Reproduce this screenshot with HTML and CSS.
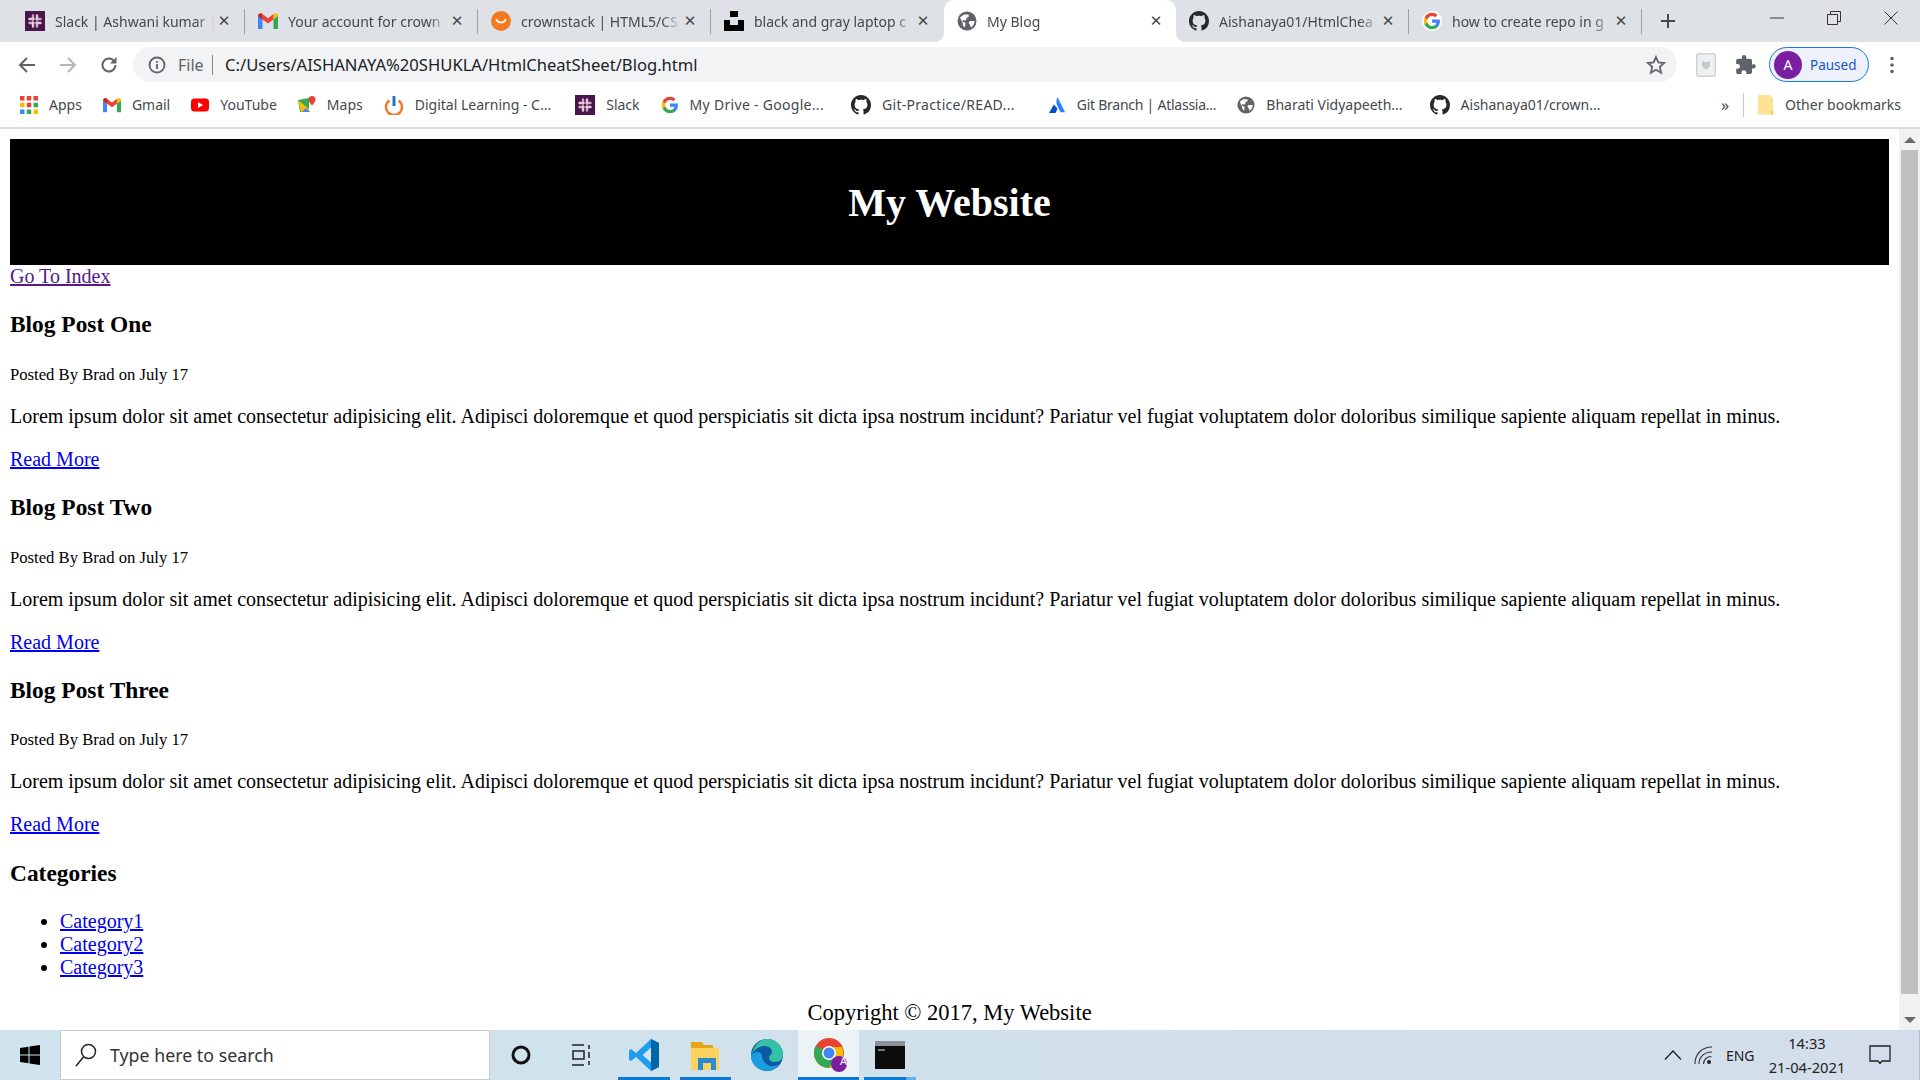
FILE: index.html
```html
<!DOCTYPE html>
<html lang="en">
<head>
  <meta charset="UTF-8">
  <title>My Blog</title>
  <link rel="stylesheet" href="styles.css">
</head>
<body>

  <svg class="defs" width="0" height="0">
    <symbol id="i-github" viewBox="0 0 16 16"><path fill="#24292e" d="M8 0C3.58 0 0 3.58 0 8c0 3.54 2.29 6.53 5.47 7.59.4.07.55-.17.55-.38 0-.19-.01-.82-.01-1.49-2.01.37-2.53-.49-2.69-.94-.09-.23-.48-.94-.82-1.13-.28-.15-.68-.52-.01-.53.63-.01 1.08.58 1.23.82.72 1.21 1.87.87 2.33.66.07-.52.28-.87.51-1.07-1.78-.2-3.64-.89-3.64-3.95 0-.87.31-1.59.82-2.15-.08-.2-.36-1.02.08-2.12 0 0 .67-.21 2.2.82.64-.18 1.32-.27 2-.27.68 0 1.36.09 2 .27 1.53-1.04 2.2-.82 2.2-.82.44 1.1.16 1.92.08 2.12.51.56.82 1.27.82 2.15 0 3.07-1.87 3.75-3.65 3.95.29.25.54.73.54 1.48 0 1.07-.01 1.93-.01 2.2 0 .21.15.46.55.38A8.013 8.013 0 0016 8c0-4.42-3.58-8-8-8z"/></symbol>
    <symbol id="i-google" viewBox="0 0 24 24">
      <path fill="#4285f4" d="M22.56 12.25c0-.78-.07-1.53-.2-2.25H12v4.26h5.92c-.26 1.37-1.04 2.53-2.21 3.31v2.77h3.57c2.08-1.92 3.28-4.74 3.28-8.09z"/>
      <path fill="#34a853" d="M12 23c2.97 0 5.46-.98 7.28-2.66l-3.57-2.77c-.98.66-2.23 1.06-3.71 1.06-2.86 0-5.29-1.93-6.16-4.53H2.18v2.84C3.99 20.53 7.7 23 12 23z"/>
      <path fill="#fbbc05" d="M5.84 14.09c-.22-.66-.35-1.36-.35-2.09s.13-1.43.35-2.09V7.07H2.18C1.43 8.55 1 10.22 1 12s.43 3.45 1.18 4.93l2.85-2.22.81-.62z"/>
      <path fill="#ea4335" d="M12 5.38c1.62 0 3.06.56 4.21 1.64l3.15-3.15C17.45 2.09 14.97 1 12 1 7.7 1 3.99 3.47 2.18 7.07l3.66 2.84c.87-2.6 3.3-4.53 6.16-4.53z"/>
    </symbol>
    <symbol id="i-gmail" viewBox="0 0 20 16">
      <path fill="#4285f4" d="M0 16V2.5L4.500 6v10z"/>
      <path fill="#34a853" d="M15.500 16V6L20 2.500V16z"/>
      <path fill="#ea4335" d="M4.500 6.500V1L10 5.200 15.500 1v5.500L10 10.600z"/>
      <path fill="#c5221f" d="M0 3c0-2.500 2.800-3.600 4.500-2v5.500L0 3z"/>
      <path fill="#fbbc04" d="M20 3c0-2.500-2.800-3.600-4.500-2v5.500L20 3z"/>
    </symbol>
    <symbol id="i-globe" viewBox="0 0 20 20">
      <circle cx="10" cy="10" r="9.500" fill="#5f6368"/>
      <path fill="#fff" d="M3 6.500 7 3.500h4.500l.5 2-2.500 1.500L9 9.500 6 9l-.5 1.500 3 1.500-.5 4.500-2-2-.5-3zM13 10h4.500c.2 2.500-1 4.800-3.500 6.500l-1-2.500-1.500-2.500z"/>
    </symbol>
    <symbol id="i-slack" viewBox="0 0 20 20">
      <rect width="20" height="20" fill="#4a154b"/>
      <g stroke-width="2.400" stroke-linecap="round">
        <path stroke="#c9a6cb" d="M8 4.500v4M12 11.500v4M4.500 12h4M11.500 8h4"/>
        <path stroke="#e6c9d5" d="M12 4.500v4M8 11.500v4M4.500 8h4M11.500 12h4"/>
      </g>
    </symbol>
  </svg>

  <div class="tabstrip">
    <div class="tab">
      <svg class="fav"><use href="#i-slack"/></svg>
      <span class="tab-title">Slack | Ashwani kumar |</span>
      <span class="tab-close">✕</span>
    </div>
    <i class="tab-sep"></i>
    <div class="tab">
      <svg class="fav"><use href="#i-gmail"/></svg>
      <span class="tab-title">Your account for crown</span>
      <span class="tab-close">✕</span>
    </div>
    <i class="tab-sep"></i>
    <div class="tab">
      <svg class="fav" viewBox="0 0 20 20"><circle cx="10" cy="10" r="10" fill="#f47a20"/><path d="M5.500 8.500c1 4 8 4 9 0" fill="none" stroke="#fff" stroke-width="1.600" stroke-linecap="round"/></svg>
      <span class="tab-title">crownstack | HTML5/CS</span>
      <span class="tab-close">✕</span>
    </div>
    <i class="tab-sep"></i>
    <div class="tab">
      <svg class="fav" viewBox="0 0 20 20"><path d="M6 0h8v6H6zM0 9h6v5h8V9h6v11H0z"/></svg>
      <span class="tab-title">black and gray laptop c</span>
      <span class="tab-close">✕</span>
    </div>
    <div class="tab tab-active">
      <svg class="fav"><use href="#i-globe"/></svg>
      <span class="tab-title">My Blog</span>
      <span class="tab-close">✕</span>
    </div>
    <div class="tab">
      <svg class="fav"><use href="#i-github"/></svg>
      <span class="tab-title">Aishanaya01/HtmlChea</span>
      <span class="tab-close">✕</span>
    </div>
    <i class="tab-sep"></i>
    <div class="tab">
      <span class="fav fav-round"><svg width="18" height="18"><use href="#i-google"/></svg></span>
      <span class="tab-title">how to create repo in g</span>
      <span class="tab-close">✕</span>
    </div>
    <i class="tab-sep"></i>
    <svg class="new-tab" width="16" height="16" viewBox="0 0 16 16"><path d="M8 1v14M1 8h14" stroke="#45484d" stroke-width="2"/></svg>
    <div class="win-controls">
      <svg width="14" height="14" viewBox="0 0 14 14"><path d="M0 7h14" stroke="#333" stroke-width="1"/></svg>
      <svg width="14" height="14" viewBox="0 0 14 14"><path d="M.5 3.500h10v10H.5zM3.500 3.500V.5h10v10h-3" fill="none" stroke="#333"/></svg>
      <svg width="14" height="14" viewBox="0 0 14 14"><path d="M.5.5l13 13M13.500.5l-13 13" stroke="#333"/></svg>
    </div>
  </div>

  <div class="toolbar">
    <svg class="tool-icon" width="18" height="18" viewBox="0 0 18 18"><path d="M17 9H2.500M9 2 2 9l7 7" fill="none" stroke="#5f6368" stroke-width="2"/></svg>
    <svg class="tool-icon" width="18" height="18" viewBox="0 0 18 18"><path d="M1 9h14.500M9 2l7 7-7 7" fill="none" stroke="#b4b7bb" stroke-width="2"/></svg>
    <svg class="tool-icon" width="18" height="18" viewBox="0 0 18 18"><path d="M15.500 9A6.500 6.500 0 1 1 13.500 4.300" fill="none" stroke="#5f6368" stroke-width="2"/><path d="M16.500 1v6.500H10z" fill="#5f6368"/></svg>
    <div class="omnibox">
      <svg width="18" height="18" viewBox="0 0 18 18"><circle cx="9" cy="9" r="7.500" fill="none" stroke="#5f6368" stroke-width="1.800"/><path d="M9 8v5M9 5v1.800" stroke="#5f6368" stroke-width="1.800"/></svg>
      <span class="omni-file">File</span>
      <i class="omni-sep"></i>
      <span class="omni-url">C:/Users/AISHANAYA%20SHUKLA/HtmlCheatSheet/Blog.html</span>
      <svg class="omni-star" width="20" height="20" viewBox="0 0 20 20"><path d="m10 2 2.400 5.400 5.800.6-4.400 3.900 1.300 5.800-5.100-3-5.100 3 1.300-5.800L1.800 8l5.800-.6z" fill="none" stroke="#5f6368" stroke-width="1.800"/></svg>
    </div>
    <svg class="ext-icon" width="20" height="24" viewBox="0 0 20 24"><rect x=".75" y=".75" width="18.500" height="22.500" rx="2" fill="#eef0f1" stroke="#cfd3d5" stroke-width="1.500"/><path d="M6 7.500 8.500 9h3L14 7.500v6l-4 3-4-3z" fill="#c4c9cb"/></svg>
    <svg class="ext-icon puzzle" width="20" height="20" viewBox="0 0 20 20"><path fill="#5f6368" d="M17.500 9.500H16V5.500c0-1-.9-1.800-1.800-1.800H10.300V2.200a2.200 2.200 0 0 0-4.400 0v1.500H2c-1 0-1.800.8-1.800 1.800v3.500h1.400a2.400 2.400 0 0 1 0 4.800H.2v3.500c0 1 .8 1.800 1.800 1.800h3.500v-1.400a2.400 2.400 0 0 1 4.800 0v1.400h3.900c.9 0 1.800-.8 1.800-1.800v-3.900h1.500a2.200 2.200 0 0 0 0-4.400z"/></svg>
    <div class="profile">
      <span class="avatar">A</span>
      <span class="profile-text">Paused</span>
    </div>
    <svg class="menu-dots" width="4" height="18" viewBox="0 0 4 18"><circle cx="2" cy="2.500" r="1.800" fill="#5f6368"/><circle cx="2" cy="9" r="1.800" fill="#5f6368"/><circle cx="2" cy="15.500" r="1.800" fill="#5f6368"/></svg>
  </div>

  <div class="bookmarks">
    <div class="bm">
      <svg class="bm-icon" viewBox="0 0 16 16">
        <g fill="#ea4335"><rect width="4" height="4"/><rect x="6" width="4" height="4"/><rect x="12" width="4" height="4"/></g>
        <g fill="#fbbc04"><rect y="6" width="4" height="4"/></g><rect x="6" y="6" width="4" height="4" fill="#ea4335"/><rect x="12" y="6" width="4" height="4" fill="#34a853"/>
        <g fill="#4285f4"><rect y="12" width="4" height="4"/></g><rect x="6" y="12" width="4" height="4" fill="#34a853"/><rect x="12" y="12" width="4" height="4" fill="#fbbc04"/>
      </svg>
      <span>Apps</span>
    </div>
    <div class="bm"><svg class="bm-icon"><use href="#i-gmail"/></svg><span>Gmail</span></div>
    <div class="bm">
      <svg class="bm-icon" viewBox="0 0 18 18"><rect y="2.500" width="18" height="13" rx="3.500" fill="#f00"/><path d="m7 6 5 3-5 3z" fill="#fff"/></svg>
      <span>YouTube</span>
    </div>
    <div class="bm">
      <svg class="bm-icon" viewBox="0 0 18 18"><path d="M0 4 11 2v14H2z" fill="#34a853"/><path d="M0 4l11 9 1 3H3z" fill="#fbbc04"/><path d="m4 16 4-4 4 4z" fill="#4285f4"/><path d="M14 0a3.500 3.500 0 0 0-3.500 3.500c0 2.500 3.500 6 3.500 6s3.500-3.500 3.500-6A3.500 3.500 0 0 0 14 0z" fill="#ea4335"/></svg>
      <span>Maps</span>
    </div>
    <div class="bm">
      <svg class="bm-icon bm-icon-wide" viewBox="0 0 20 20"><path d="M5.500 5.500a8 8 0 1 0 9 0" fill="none" stroke="#f0782a" stroke-width="2.500"/><path d="M10 1v10" stroke="#1976c8" stroke-width="3"/></svg>
      <span>Digital Learning - C...</span>
    </div>
    <div class="bm bm-push-sm"><svg class="bm-icon bm-icon-wide"><use href="#i-slack"/></svg><span>Slack</span></div>
    <div class="bm"><svg class="bm-icon"><use href="#i-google"/></svg><span class="bm-loose">My Drive - Google...</span></div>
    <div class="bm bm-push"><svg class="bm-icon bm-icon-wide"><use href="#i-github"/></svg><span class="bm-loose">Git-Practice/READ...</span></div>
    <div class="bm bm-push-more">
      <svg class="bm-icon" viewBox="0 0 18 20"><path d="M9.500 1C7.500 5 8 9 10.500 13L13 18h5z" fill="#2684ff"/><path d="M5.500 9.500 0 19h7.500l2-5z" fill="#0052cc"/></svg>
      <span class="bm-tight">Git Branch | Atlassia...</span>
    </div>
    <div class="bm"><svg class="bm-icon"><use href="#i-globe"/></svg><span>Bharati Vidyapeeth...</span></div>
    <div class="bm bm-push"><svg class="bm-icon bm-icon-wide"><use href="#i-github"/></svg><span>Aishanaya01/crown...</span></div>
    <div class="bm-right">
      <span class="bm-more">»</span>
      <i class="bm-sep"></i>
      <div class="bm">
        <svg class="bm-folder" width="16" height="20" viewBox="0 0 16 20"><path d="M1 0h11l3 3v15.500a1 1 0 0 1-1 1H1a1 1 0 0 1-1-1V1a1 1 0 0 1 1-1z" fill="#fde293"/><path d="M12.500 20v-4h3v3z" fill="#f5cf65"/></svg>
        <span>Other bookmarks</span>
      </div>
    </div>
  </div>

  <div class="viewport">
    <div class="page">
      <header class="site-header">
        <h1>My Website</h1>
      </header>
      <a class="visited" href="#">Go To Index</a>

      <h3>Blog Post One</h3>
      <p><small>Posted By Brad on July 17</small></p>
      <p>Lorem ipsum dolor sit amet consectetur adipisicing elit. Adipisci doloremque et quod perspiciatis sit dicta ipsa nostrum incidunt? Pariatur vel fugiat voluptatem dolor doloribus similique sapiente aliquam repellat in minus.</p>
      <a href="#">Read More</a>

      <h3>Blog Post Two</h3>
      <p><small>Posted By Brad on July 17</small></p>
      <p>Lorem ipsum dolor sit amet consectetur adipisicing elit. Adipisci doloremque et quod perspiciatis sit dicta ipsa nostrum incidunt? Pariatur vel fugiat voluptatem dolor doloribus similique sapiente aliquam repellat in minus.</p>
      <a href="#">Read More</a>

      <h3>Blog Post Three</h3>
      <p><small>Posted By Brad on July 17</small></p>
      <p>Lorem ipsum dolor sit amet consectetur adipisicing elit. Adipisci doloremque et quod perspiciatis sit dicta ipsa nostrum incidunt? Pariatur vel fugiat voluptatem dolor doloribus similique sapiente aliquam repellat in minus.</p>
      <a href="#">Read More</a>

      <h3>Categories</h3>
      <ul>
        <li><a href="#">Category1</a></li>
        <li><a href="#">Category2</a></li>
        <li><a href="#">Category3</a></li>
      </ul>

      <footer class="site-footer">Copyright © 2017, My Website</footer>
    </div>
    <div class="scrollbar">
      <div class="sb-btn"><i class="sb-up"></i></div>
      <div class="sb-thumb"></div>
      <div class="sb-gap"></div>
      <div class="sb-btn"><i class="sb-down"></i></div>
    </div>
  </div>

  <div class="taskbar">
    <svg class="start" width="20" height="20" viewBox="0 0 20 20"><path d="M0 3l8.500-1.200V9.500H0zM9.500 1.600 20 0v9.500H9.500zM0 10.500h8.500v7.700L0 17zM9.500 10.500H20V20L9.500 18.400z"/></svg>
    <div class="search">
      <svg width="22" height="24" viewBox="0 0 22 24"><circle cx="13.500" cy="8.500" r="7" fill="none" stroke="#222" stroke-width="1.500"/><path d="M8.500 14 1 23" stroke="#222" stroke-width="1.500"/></svg>
      <span>Type here to search</span>
    </div>
    <div class="task-cell"><svg width="20" height="20" viewBox="0 0 20 20"><circle cx="10" cy="10" r="8" fill="none" stroke="#111" stroke-width="3"/></svg></div>
    <div class="task-cell"><svg width="20" height="22" viewBox="0 0 20 22"><path d="M0 1h12M0 21h12M1 7h11v8H1zM17 1v4M17 8v6M17 17v4" fill="none" stroke="#222" stroke-width="1.500"/></svg></div>
    <div class="task-cell task-open">
      <svg width="30" height="32" viewBox="0 0 30 32"><path d="M22 0 30 4v24l-8 4L7 18l-5 4-2-1.500V11.500L2 10l5 4z" fill="#1f9cf0"/><path d="M22 0 30 4v24l-8 4z" fill="#0065a9"/><path d="M22 8.500 13.500 16l8.500 7.500z" fill="#d2e6f2"/></svg>
    </div>
    <div class="task-cell task-open">
      <svg width="28" height="30" viewBox="0 0 28 30"><path d="M0 2h11l2 3h9v6H0z" fill="#e8a416"/><path d="M0 8h28v22H0z" fill="#fcd25f"/><path d="M7 18h18v12h-5v-7h-8v7H7z" fill="#2a8ad4"/></svg>
    </div>
    <div class="task-cell">
      <svg width="32" height="32" viewBox="0 0 32 32"><circle cx="16" cy="16" r="16" fill="#0c59a4"/><path d="M16 0a16 16 0 0 1 16 16c0 4-3 7-8 7-4 0-6-2-6-4 0-3 3-3 3-6 0-4-4-6-8-6-5 0-10 4-12 8C3 6 9 0 16 0z" fill="#35c1a5"/><path d="M11 17c0 6 6 11 12 10 2-.3 5-1.500 6-3-3 5-9 8-13 8-8 0-16-6-16-16 3-4 11-4 11 1z" fill="#1b9de2"/></svg>
    </div>
    <div class="task-cell task-active">
      <svg class="chrome-icon" width="36" height="36" viewBox="0 0 36 36">
        <circle cx="16" cy="16" r="15" fill="#ea4335"/>
        <path d="M16 16 3 8.500A15 15 0 0 0 16 31l7.500-13z" fill="#34a853"/>
        <path d="M16 10h13a15 15 0 0 1-13 21l6-10z" fill="#fbbc04"/>
        <circle cx="16" cy="16" r="7" fill="#fff"/><circle cx="16" cy="16" r="5.500" fill="#4285f4"/>
        <circle cx="26" cy="27" r="8" fill="#7b1fa2"/>
      </svg>
      <span class="chrome-badge">A</span>
    </div>
    <div class="task-cell task-open task-split">
      <svg width="30" height="28" viewBox="0 0 30 28"><rect width="30" height="28" fill="#8b9196"/><rect y="5" width="30" height="23" fill="#0c0c0c"/><path d="M3 9h7" stroke="#ddd"/></svg>
    </div>
    <div class="tray">
      <svg width="20" height="12" viewBox="0 0 20 12"><path d="M2 10.500 10 2l8 8.500" fill="none" stroke="#222" stroke-width="1.300"/></svg>
      <svg class="wifi" width="20" height="20" viewBox="0 0 20 20"><g fill="none" stroke="#333" stroke-width="1.100"><path d="M1 19C1 9 8 2 18 2"/><path d="M5 19c0-7 5-12 13-12"/><path d="M9.500 19c0-4 3-7.500 8-7.500"/></g><circle cx="15" cy="17" r="2" fill="#222"/></svg>
      <span class="tray-lang">ENG</span>
      <div class="tray-clock"><span>14:33</span><span>21-04-2021</span></div>
      <svg class="tray-note" width="22" height="20" viewBox="0 0 22 20"><path d="M1 1h20v15h-8l-2 2.500L9 16H1z" fill="none" stroke="#222" stroke-width="1.300"/></svg>
    </div>
  </div>

</body>
</html>
```

FILE: styles.css
```css
* {
  box-sizing: border-box;
}
html, body {
  height: 100%;
}
body {
  margin: 0;
  display: flex;
  flex-direction: column;
  overflow: hidden;
  background: #fff;
  font-family: "Noto Sans", sans-serif;
  color: #3c4043;
}
.defs {
  position: absolute;
}

/* tabs */
.tabstrip {
  height: 42px;
  flex: none;
  display: flex;
  align-items: center;
  padding-left: 12px;
  background: #dee1e6;
}
.tab {
  width: 232px;
  height: 42px;
  flex: none;
  display: flex;
  align-items: center;
  gap: 10px;
  padding: 0 13px;
  font-size: 14px;
  color: #45484d;
}
.tab-active {
  position: relative;
  margin-left: 1px;
  background: #fff;
  border-radius: 10px 10px 0 0;
}
.tab-active::before,
.tab-active::after {
  content: "";
  position: absolute;
  bottom: 0;
  width: 10px;
  height: 10px;
}
.tab-active::before {
  left: -10px;
  background: radial-gradient(circle at 0 0, #dee1e6 10px, #fff 10.500px);
}
.tab-active::after {
  right: -10px;
  background: radial-gradient(circle at 100% 0, #dee1e6 10px, #fff 10.500px);
}
.tab-title {
  flex: 1;
  min-width: 0;
  margin-right: -8px;
  white-space: nowrap;
  -webkit-mask-image: linear-gradient(to right, #000 88%, transparent 100%);
  mask-image: linear-gradient(to right, #000 88%, transparent 100%);
}
.tab-close {
  width: 14px;
  flex: none;
  text-align: center;
  font-size: 15px;
  font-family: "DejaVu Sans", sans-serif;
  font-weight: bold;
  color: #45484d;
}
.tab-sep {
  width: 1px;
  height: 25px;
  flex: none;
  background: #9aa0a6;
}
.fav {
  width: 20px;
  height: 20px;
  flex: none;
}
.fav-round {
  display: flex;
  align-items: center;
  justify-content: center;
  border-radius: 50%;
  background: #fff;
}
.new-tab {
  margin-left: 18px;
}
.win-controls {
  margin-left: auto;
  width: 150px;
  padding: 0 22px 6px 0;
  display: flex;
  justify-content: space-between;
  align-items: center;
}

/* toolbar */
.toolbar {
  height: 43px;
  flex: none;
  display: flex;
  align-items: center;
  padding: 5px 0 3px;
  background: #fff;
}
.tool-icon {
  margin-left: 18px;
  margin-right: 5px;
}
.omnibox {
  width: 1544px;
  height: 35px;
  margin-left: 10px;
  display: flex;
  align-items: center;
  padding: 0 11px 0 15px;
  border-radius: 18px;
  background: #f1f3f4;
  font-size: 16px;
}
.omni-file {
  margin-left: 12px;
  color: #5f6368;
}
.omni-sep {
  width: 1px;
  height: 20px;
  margin: 0 12.500px 0 8px;
  background: #80868b;
}
.omni-url {
  font-size: 16.600px;
  color: #202124;
}
.omni-star {
  margin-left: auto;
}
.ext-icon {
  margin-left: 19px;
}
.puzzle {
  margin-left: 20px;
}
.profile {
  width: 100px;
  height: 35px;
  margin-left: 13px;
  display: flex;
  align-items: center;
  gap: 8px;
  padding-left: 4px;
  border: 1.500px solid #1a73e8;
  border-radius: 18px;
  background: #ecf1fb;
  font-size: 13.500px;
  color: #1a56c4;
}
.avatar {
  width: 28px;
  height: 28px;
  display: flex;
  align-items: center;
  justify-content: center;
  border-radius: 50%;
  background: #7b1fa2;
  color: #fff;
  font-size: 14px;
}
.menu-dots {
  margin-left: 21px;
}

/* bookmarks */
.bookmarks {
  height: 44px;
  flex: none;
  display: flex;
  align-items: center;
  gap: 21px;
  padding: 0 19px 3px 20px;
  border-bottom: 2px solid #dcdde1;
  font-size: 14px;
  color: #45484d;
}
.bm {
  display: flex;
  align-items: center;
  gap: 11px;
  white-space: nowrap;
}
.bm-push-sm {
  margin-left: 3px;
}
.bm-push {
  margin-left: 6px;
}
.bm-push-more {
  margin-left: 12px;
}
.bm-loose {
  letter-spacing: .3px;
}
.bm-tight {
  letter-spacing: -.25px;
}
.bm-icon {
  width: 18px;
  height: 18px;
  flex: none;
}
.bm-icon-wide {
  width: 20px;
  height: 20px;
}
.bm-right {
  margin-left: auto;
  display: flex;
  align-items: center;
}
.bm-more {
  font-size: 16px;
  margin-right: 14px;
}
.bm-sep {
  width: 1px;
  height: 24px;
  margin-right: 14px;
  background: #c8cacd;
}

/* page */
.viewport {
  flex: 1;
  min-height: 0;
  display: flex;
}
.page {
  flex: 1;
  min-width: 0;
  overflow: hidden;
  padding: 10px;
  font-family: "Liberation Serif", "Times New Roman", serif;
  font-size: 20px;
  color: #000;
}
.site-header {
  padding: 12.500px 0;
  background: #000;
  color: #fff;
  text-align: center;
}
h1 {
  margin: 27px 0;
  font-size: 40px;
}
h3 {
  margin: 23.400px 0;
  font-size: 23.400px;
}
.page p {
  margin: 20px 0;
}
.page a {
  color: #0000ee;
}
.page a.visited {
  color: #551a8b;
}
.page ul {
  margin: 23.400px 0 21px;
  padding-left: 50px;
}
.site-footer {
  font-size: 22.500px;
  text-align: center;
}
.scrollbar {
  width: 21px;
  flex: none;
  display: flex;
  flex-direction: column;
  background: #f1f1f1;
}
.sb-btn {
  height: 21px;
  display: flex;
  align-items: center;
  justify-content: center;
}
.sb-up {
  border: 6px solid transparent;
  border-top: 0;
  border-bottom: 6px solid #6a6a6a;
}
.sb-down {
  border: 6px solid transparent;
  border-bottom: 0;
  border-top: 6px solid #6a6a6a;
}
.sb-thumb {
  height: 844px;
  margin: 0 2px;
  background: #c1c1c1;
}
.sb-gap {
  flex: 1;
}

/* windows taskbar */
.taskbar {
  height: 50px;
  flex: none;
  display: flex;
  align-items: center;
  padding-left: 20px;
  background: linear-gradient(to right, #cfe4ec, #d3deea);
  color: #222;
}
.start {
  flex: none;
}
.search {
  width: 430px;
  height: 50px;
  margin-left: 20px;
  display: flex;
  align-items: center;
  gap: 13px;
  padding-left: 14px;
  border: 1px solid #c8ccce;
  background: #fff;
  font-size: 17.800px;
  color: #333;
}
.task-cell {
  position: relative;
  width: 61.500px;
  height: 50px;
  flex: none;
  display: flex;
  align-items: center;
  justify-content: center;
}
.task-open::after,
.task-active::after {
  content: "";
  position: absolute;
  left: 5px;
  right: 5px;
  bottom: 0;
  height: 3px;
  background: #0a78d4;
}
.task-active {
  background: #ebf3f7;
}
.task-active::after {
  left: 0;
  right: 0;
}
.task-split::after {
  background: linear-gradient(to right, #0a78d4 80%, #66aee8 80%);
}
.chrome-icon {
  margin-left: 6px;
}
.chrome-badge {
  position: absolute;
  left: 39px;
  top: 23px;
  width: 14px;
  text-align: center;
  font-size: 11px;
  color: #fff;
}
.tray {
  margin-left: auto;
  height: 50px;
  display: flex;
  align-items: center;
  padding-right: 6px;
  border-right: 1px solid #aebfcc;
}
.wifi {
  margin-left: 11px;
}
.tray-lang {
  margin-left: 12px;
  font-size: 14px;
}
.tray-clock {
  width: 100px;
  margin-left: 2.500px;
  display: flex;
  flex-direction: column;
  align-items: center;
  gap: 3px;
  font-size: 14.700px;
  line-height: 21px;
}
.tray-note {
  margin-left: 12px;
  margin-right: 22px;
}
```
